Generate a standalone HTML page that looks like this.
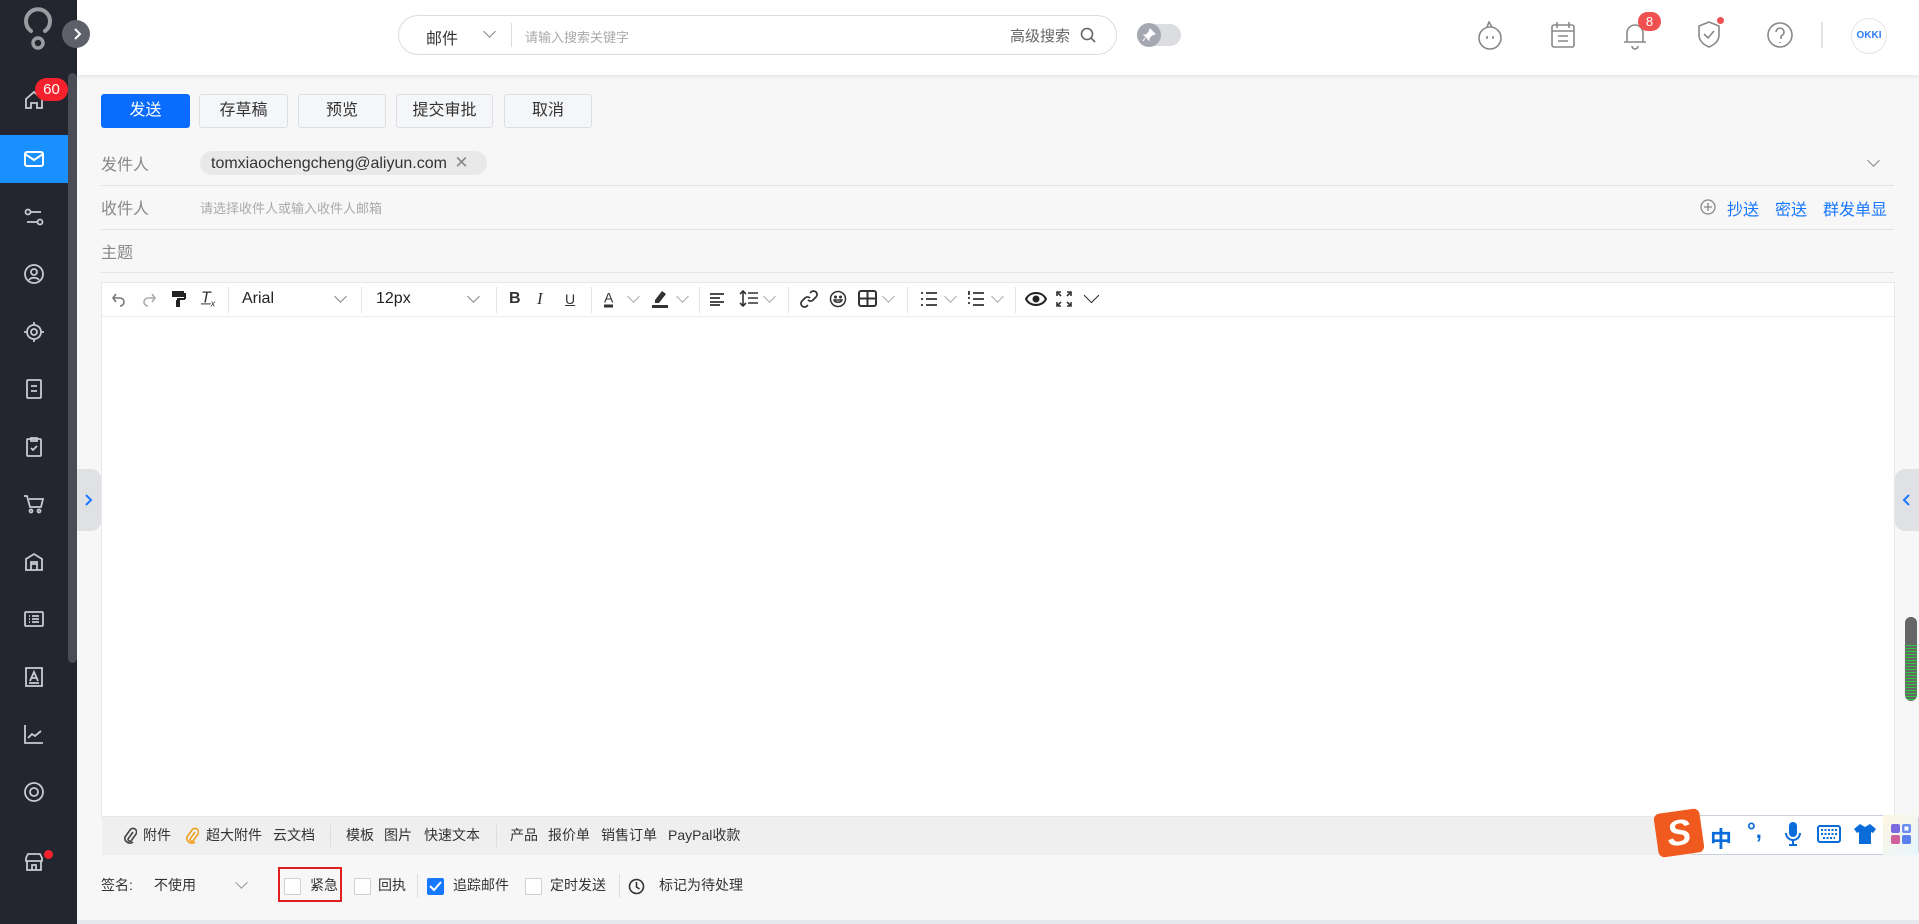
<!DOCTYPE html>
<html><head><meta charset="utf-8"><style>
*{box-sizing:border-box;margin:0;padding:0}
body{width:1919px;height:924px;overflow:hidden;background:#f7f7f8;font-family:"Liberation Sans","Noto Sans CJK SC",sans-serif;color:#333;position:relative}
.abs{position:absolute}
.side{left:0;top:0;width:77px;height:924px;background:#23262e}
.sb{left:68px;top:73px;width:9px;height:590px;background:#4a4d55;border-radius:5px}
.ico{position:absolute;left:22px;width:24px;height:24px}
.hdr{left:77px;top:0;width:1842px;height:75px;background:#fff;box-shadow:0 2px 4px rgba(0,0,0,.08)}
.btn{position:absolute;top:94px;height:34px;border:1px solid #dcdfe6;background:#f5f6f8;border-radius:3px;font-size:16px;line-height:32px;text-align:center;color:#333}
.lbl{position:absolute;left:101px;font-size:16px;color:#888}
.hr{position:absolute;left:101px;width:1793px;height:1px;background:#e3e3e3}
.tb{position:absolute;top:299px;transform:translateY(-50%);font-size:14px;color:#333}
.dv{position:absolute;top:287px;width:1px;height:26px;background:#e5e5e5}
.chev{position:absolute;width:9px;height:9px;border-right:1.5px solid #888;border-bottom:1.5px solid #888;transform:rotate(45deg)}
.ab{position:absolute;top:835px;transform:translateY(-50%);font-size:14px;color:#333}
.sg{position:absolute;top:885px;transform:translateY(-50%);font-size:14px;color:#333}
.cb{position:absolute;top:878px;width:17px;height:17px;border:1px solid #d0d0d0;background:#fff;border-radius:2px}
</style></head><body>
<div class="abs side"></div>
<div class="abs sb"></div>
<svg class="abs" style="left:20px;top:6px" width="36" height="46" viewBox="0 0 36 46"><path d="M11 25 A12 12 0 1 1 25 25" fill="none" stroke="#9a9ca2" stroke-width="4" stroke-linecap="round"/><circle cx="18" cy="37" r="5" fill="none" stroke="#9a9ca2" stroke-width="3.5"/></svg>
<div class="abs hdr"></div>
<div class="abs" style="left:62px;top:20px;width:28px;height:28px;border-radius:50%;background:#5d6068"></div>
<svg class="abs" style="left:70px;top:27px" width="14" height="14"><path d="M5 2l5 5-5 5" fill="none" stroke="#fff" stroke-width="2"/></svg>
<div class="abs" style="left:0;top:135px;width:68px;height:48px;background:#1890ff"></div>
<svg class="ico" style="top:88px" viewBox="0 0 24 24"><path d="M4 11l8-7 8 7v9h-5v-5h-6v5H4z" fill="none" stroke="#c8cad0" stroke-width="1.8"/></svg>
<div class="abs" style="left:35px;top:78px;width:33px;height:23px;border-radius:12px;background:#f5222d;color:#fff;font-size:15px;text-align:center;line-height:23px">60</div>
<svg class="ico" style="top:147px" viewBox="0 0 24 24"><rect x="3" y="5" width="18" height="14" rx="2" fill="none" stroke="#fff" stroke-width="2"/><path d="M3 7l9 6 9-6" fill="none" stroke="#fff" stroke-width="2"/></svg>
<svg class="ico" style="top:205px" viewBox="0 0 24 24" fill="none" stroke="#c8cad0" stroke-width="1.8"><circle cx="6" cy="7" r="2.5"/><circle cx="18" cy="17" r="2.5"/><path d="M9 7h10M5 17h10"/></svg>
<svg class="ico" style="top:262px" viewBox="0 0 24 24" fill="none" stroke="#c8cad0" stroke-width="1.8"><circle cx="12" cy="12" r="9"/><circle cx="12" cy="10" r="3"/><path d="M7 18c2-3 8-3 10 0"/></svg>
<svg class="ico" style="top:320px" viewBox="0 0 24 24" fill="none" stroke="#c8cad0" stroke-width="1.8"><circle cx="12" cy="12" r="7"/><circle cx="12" cy="12" r="3"/><path d="M12 2v3M12 19v3M2 12h3M19 12h3"/></svg>
<svg class="ico" style="top:377px" viewBox="0 0 24 24" fill="none" stroke="#c8cad0" stroke-width="1.8"><rect x="5" y="3" width="14" height="18" rx="1"/><path d="M9 9h6M9 14h6"/></svg>
<svg class="ico" style="top:435px" viewBox="0 0 24 24" fill="none" stroke="#c8cad0" stroke-width="1.8"><rect x="5" y="4" width="14" height="17" rx="1"/><path d="M9 3h6v3H9zM9 13l2 2 4-4"/></svg>
<svg class="ico" style="top:492px" viewBox="0 0 24 24" fill="none" stroke="#c8cad0" stroke-width="1.8"><path d="M2 4h3l3 11h11l2-8H7"/><circle cx="9" cy="19" r="1.5"/><circle cx="17" cy="19" r="1.5"/></svg>
<svg class="ico" style="top:550px" viewBox="0 0 24 24" fill="none" stroke="#c8cad0" stroke-width="1.8"><path d="M4 20V9l8-5 8 5v11zM9 20v-8h6v8M9 14h6"/></svg>
<svg class="ico" style="top:607px" viewBox="0 0 24 24" fill="none" stroke="#c8cad0" stroke-width="1.8"><rect x="3" y="5" width="18" height="14" rx="1"/><path d="M7 9h1M10 9h7M7 12h1M10 12h7M7 15h1M10 15h7"/></svg>
<svg class="ico" style="top:665px" viewBox="0 0 24 24" fill="none" stroke="#c8cad0" stroke-width="1.8"><rect x="4" y="3" width="16" height="18"/><path d="M8 16l4-9 4 9M9.5 13h5M7 18h10"/></svg>
<svg class="ico" style="top:722px" viewBox="0 0 24 24" fill="none" stroke="#c8cad0" stroke-width="1.8"><path d="M3 3v18h18M6 16l4-4 3 2 6-5"/></svg>
<svg class="ico" style="top:780px" viewBox="0 0 24 24" fill="none" stroke="#c8cad0" stroke-width="1.8"><circle cx="12" cy="12" r="9"/><circle cx="12" cy="12" r="4"/></svg>
<svg class="ico" style="top:850px" viewBox="0 0 24 24" fill="none" stroke="#c8cad0" stroke-width="1.8"><path d="M4 8l2-4h12l2 4v3H4zM5 11v9h14v-9M10 20v-5h4v5"/></svg>
<div class="abs" style="left:44px;top:850px;width:9px;height:9px;border-radius:50%;background:#f5222d"></div>
<div class="abs" style="left:398px;top:15px;width:719px;height:40px;border:1px solid #dcdcdc;border-radius:20px;background:#fff"></div>
<div class="abs" style="left:426px;top:25px;font-size:16px;color:#333">邮件</div>
<div class="chev" style="left:485px;top:27px"></div>
<div class="abs" style="left:511px;top:23px;width:1px;height:24px;background:#ddd"></div>
<div class="abs" style="left:525px;top:27px;font-size:13px;color:#aaa">请输入搜索关键字</div>
<div class="abs" style="left:1010px;top:25px;font-size:15px;color:#666">高级搜索</div>
<svg class="abs" style="left:1080px;top:27px" width="16" height="16" fill="none" stroke="#666" stroke-width="1.6"><circle cx="7" cy="7" r="5.5"/><path d="M11 11l4 4"/></svg>
<div class="abs" style="left:1138px;top:24px;width:43px;height:22px;border-radius:11px;background:#dcdde1"></div>
<div class="abs" style="left:1137px;top:23px;width:24px;height:24px;border-radius:50%;background:#a5a8b0"></div>
<svg class="abs" style="left:1142px;top:28px" width="14" height="14"><path d="M8 1l5 5-3 1-3 3 0 2-5-5 2 0 3-3z M3 10l-2 3" fill="#fff" stroke="#fff"/></svg>
<svg class="abs" style="left:1476px;top:21px" width="28" height="30" fill="none" stroke="#888" stroke-width="1.6"><circle cx="14" cy="17" r="11"/><path d="M11 6l2-5 3 5M11 15v3M17 15v3"/></svg>
<svg class="abs" style="left:1550px;top:21px" width="26" height="28" fill="none" stroke="#888" stroke-width="1.6"><rect x="2" y="4" width="22" height="22" rx="2"/><path d="M7 1v6M19 1v6M2 10h22M8 15h10M8 20h10"/></svg>
<svg class="abs" style="left:1622px;top:20px" width="26" height="30" fill="none" stroke="#888" stroke-width="1.6"><path d="M5 22V13a8 8 0 0 1 16 0v9M2 22h22M10 26a3 3 0 0 0 6 0"/></svg>
<div class="abs" style="left:1638px;top:12px;width:23px;height:19px;border-radius:10px;background:#f05050;color:#fff;font-size:13px;text-align:center;line-height:19px">8</div>
<svg class="abs" style="left:1696px;top:20px" width="26" height="30" fill="none" stroke="#888" stroke-width="1.6"><path d="M13 2l10 4v9c0 6-5 10-10 12C8 25 3 21 3 15V6z M8 14l4 4 6-7"/></svg>
<div class="abs" style="left:1717px;top:17px;width:7px;height:7px;border-radius:50%;background:#f05050"></div>
<svg class="abs" style="left:1766px;top:21px" width="28" height="28" fill="none" stroke="#888" stroke-width="1.6"><circle cx="14" cy="14" r="12"/><path d="M10 11a4 4 0 1 1 5 4v3M14 21v1"/></svg>
<div class="abs" style="left:1821px;top:22px;width:2px;height:26px;background:#e2e2e2"></div>
<div class="abs" style="left:1851px;top:18px;width:36px;height:36px;border-radius:50%;border:1px solid #e5e5e5;background:#fff;font-size:10px;font-weight:bold;color:#2d7cf6;text-align:center;line-height:34px">OKKI</div>
<div class="btn" style="left:101px;width:89px;background:#0a6cff;border-color:#0a6cff;color:#fff">发送</div>
<div class="btn" style="left:199px;width:89px">存草稿</div>
<div class="btn" style="left:298px;width:88px">预览</div>
<div class="btn" style="left:396px;width:97px">提交审批</div>
<div class="btn" style="left:504px;width:88px">取消</div>
<div class="lbl" style="top:151px">发件人</div>
<div class="abs" style="left:200px;top:151px;width:287px;height:24px;border-radius:12px;background:#e9e9ea;font-size:16px;line-height:24px;padding-left:11px;color:#333">tomxiaochengcheng@aliyun.com <span style="color:#888;font-size:17px;margin-left:3px">✕</span></div>
<div class="chev" style="left:1869px;top:156px"></div>
<div class="hr" style="top:185px"></div>
<div class="lbl" style="top:195px">收件人</div>
<div class="abs" style="left:200px;top:198px;font-size:13px;color:#aaa">请选择收件人或输入收件人邮箱</div>
<svg class="abs" style="left:1700px;top:199px" width="16" height="16" fill="none" stroke="#888" stroke-width="1.3"><circle cx="8" cy="8" r="7"/><path d="M8 4v8M4 8h8"/></svg>
<div class="abs" style="left:1727px;top:196px;font-size:16px;color:#1677ff">抄送</div>
<div class="abs" style="left:1775px;top:196px;font-size:16px;color:#1677ff">密送</div>
<div class="abs" style="left:1823px;top:196px;font-size:16px;color:#1677ff">群发单显</div>
<div class="hr" style="top:229px"></div>
<div class="lbl" style="top:239px">主题</div>
<div class="hr" style="top:272px"></div>
<div class="abs" style="left:101px;top:282px;width:1794px;height:535px;background:#fff;border:1px solid #e8e8e8"></div>
<div class="abs" style="left:102px;top:316px;width:1792px;height:1px;background:#eee"></div>
<svg class="abs" style="left:111px;top:291px" width="16" height="16" fill="none" stroke="#777" stroke-width="1.6"><path d="M5 3L2 7l3 4M2 7h7a4 4 0 0 1 0 8"/></svg>
<svg class="abs" style="left:141px;top:291px" width="16" height="16" fill="none" stroke="#aaa" stroke-width="1.6"><path d="M11 3l3 4-3 4M14 7H7a4 4 0 0 0 0 8"/></svg>
<svg class="abs" style="left:171px;top:290px" width="16" height="18" fill="#222"><rect x="1" y="1" width="12" height="6"/><rect x="13" y="3" width="2" height="6"/><rect x="6" y="8" width="8" height="2"/><rect x="5" y="10" width="4" height="7"/></svg>
<div class="tb" style="left:201px;font-style:italic;font-size:16px;text-decoration:underline">T<sub style="font-size:9px">x</sub></div>
<div class="dv" style="left:228px"></div>
<div class="tb" style="left:242px;font-size:16px;color:#222">Arial</div>
<div class="chev" style="left:336px;top:292px"></div>
<div class="dv" style="left:361px"></div>
<div class="tb" style="left:376px;font-size:16px;color:#222">12px</div>
<div class="chev" style="left:469px;top:292px"></div>
<div class="dv" style="left:496px"></div>
<div class="tb" style="left:509px;font-weight:bold;font-size:16px">B</div>
<div class="tb" style="left:537px;font-style:italic;font-family:'Liberation Serif',serif;font-size:17px">I</div>
<div class="tb" style="left:565px;text-decoration:underline;font-size:14px">U</div>
<div class="dv" style="left:591px"></div>
<div class="tb" style="left:604px;font-size:14px;border-bottom:3px solid #333;line-height:14px">A</div>
<div class="chev" style="left:629px;top:292px;border-color:#aaa"></div>
<svg class="abs" style="left:651px;top:289px" width="18" height="20" fill="#333"><path d="M4 11l7-9 4 3-7 9H4z"/><rect x="1" y="16" width="16" height="3"/></svg>
<div class="chev" style="left:678px;top:292px;border-color:#aaa"></div>
<div class="dv" style="left:699px"></div>
<svg class="abs" style="left:709px;top:292px" width="16" height="14" stroke="#333" stroke-width="1.8"><path d="M1 2h14M1 6h10M1 10h14M1 13h10"/></svg>
<svg class="abs" style="left:739px;top:290px" width="20" height="17" fill="none" stroke="#333" stroke-width="1.6"><path d="M4 1v15M1 4l3-3 3 3M1 13l3 3 3-3M9 3h10M9 8h10M9 13h10"/></svg>
<div class="chev" style="left:765px;top:292px;border-color:#aaa"></div>
<div class="dv" style="left:788px"></div>
<svg class="abs" style="left:800px;top:290px" width="18" height="18" fill="none" stroke="#333" stroke-width="1.7"><path d="M8 10a3.5 3.5 0 0 0 5 0l3-3a3.5 3.5 0 0 0-5-5l-1 1M10 8a3.5 3.5 0 0 0-5 0l-3 3a3.5 3.5 0 0 0 5 5l1-1"/></svg>
<svg class="abs" style="left:829px;top:290px" width="18" height="18" fill="none" stroke="#333" stroke-width="1.5"><circle cx="9" cy="9" r="7.5"/><path d="M5 10c1 3 7 3 8 0z"/><circle cx="6.5" cy="7" r=".8" fill="#333"/><circle cx="11.5" cy="7" r=".8" fill="#333"/></svg>
<svg class="abs" style="left:858px;top:290px" width="19" height="17"><rect x="1" y="1" width="17" height="15" rx="2" fill="none" stroke="#333" stroke-width="2"/><path d="M1 8.5h17M9.5 1v15" stroke="#333" stroke-width="2"/></svg>
<div class="chev" style="left:884px;top:292px;border-color:#aaa"></div>
<div class="dv" style="left:907px"></div>
<svg class="abs" style="left:920px;top:291px" width="18" height="16" stroke="#333" stroke-width="1.8"><path d="M1 2h2M1 8h2M1 14h2M6 2h11M6 8h11M6 14h11"/></svg>
<div class="chev" style="left:946px;top:292px;border-color:#aaa"></div>
<svg class="abs" style="left:967px;top:291px" width="18" height="16" stroke="#333" stroke-width="1.8"><path d="M2 0v4M1 7h2M1 12h2M6 2h11M6 8h11M6 14h11"/></svg>
<div class="chev" style="left:993px;top:292px;border-color:#aaa"></div>
<div class="dv" style="left:1015px"></div>
<svg class="abs" style="left:1025px;top:290px" width="22" height="18"><path d="M1 9c4-8 16-8 20 0-4 8-16 8-20 0z" fill="none" stroke="#222" stroke-width="2"/><circle cx="11" cy="9" r="3.5" fill="#222"/></svg>
<svg class="abs" style="left:1056px;top:291px" width="16" height="16" stroke="#333" stroke-width="1.6" fill="none"><path d="M1 5V1h4M1 1l4 4M11 1h4v4M15 1l-4 4M1 11v4h4M1 15l4-4M15 11v4h-4M15 15l-4-4"/></svg>
<div class="chev" style="left:1086px;top:290px;border-color:#222;width:11px;height:11px"></div>
<div class="abs" style="left:102px;top:817px;width:1792px;height:38px;background:#efefef"></div>
<svg class="abs" style="left:123px;top:827px" width="14" height="18" fill="none" stroke="#444" stroke-width="1.6"><path d="M10 5l-5 7a2 2 0 0 0 3 2l5-7a3.5 3.5 0 0 0-6-4l-5 7a5 5 0 0 0 8 5"/></svg>
<div class="ab" style="left:143px">附件</div>
<svg class="abs" style="left:185px;top:827px" width="14" height="18" fill="none" stroke="#f0a020" stroke-width="1.6"><path d="M10 5l-5 7a2 2 0 0 0 3 2l5-7a3.5 3.5 0 0 0-6-4l-5 7a5 5 0 0 0 8 5"/></svg>
<div class="ab" style="left:206px">超大附件</div>
<div class="ab" style="left:273px">云文档</div>
<div class="abs" style="left:330px;top:825px;width:1px;height:22px;background:#ddd"></div>
<div class="ab" style="left:346px">模板</div>
<div class="ab" style="left:384px">图片</div>
<div class="ab" style="left:424px">快速文本</div>
<div class="abs" style="left:496px;top:825px;width:1px;height:22px;background:#ddd"></div>
<div class="ab" style="left:510px">产品</div>
<div class="ab" style="left:548px">报价单</div>
<div class="ab" style="left:601px">销售订单</div>
<div class="ab" style="left:668px">PayPal收款</div>
<div class="sg" style="left:101px">签名:</div>
<div class="sg" style="left:154px">不使用</div>
<div class="chev" style="left:237px;top:878px;border-color:#999"></div>
<div class="abs" style="left:278px;top:867px;width:64px;height:35px;border:2px solid #e02020"></div>
<div class="cb" style="left:284px"></div>
<div class="sg" style="left:310px">紧急</div>
<div class="cb" style="left:354px"></div>
<div class="sg" style="left:378px">回执</div>
<div class="abs" style="left:417px;top:874px;width:1px;height:24px;background:#ddd"></div>
<div class="cb" style="left:427px;background:#1677ff;border-color:#1677ff"></div>
<svg class="abs" style="left:429px;top:881px" width="13" height="11" fill="none" stroke="#fff" stroke-width="2"><path d="M1 5l4 4 7-8"/></svg>
<div class="sg" style="left:453px">追踪邮件</div>
<div class="cb" style="left:525px"></div>
<div class="sg" style="left:550px">定时发送</div>
<div class="abs" style="left:619px;top:874px;width:1px;height:24px;background:#ddd"></div>
<svg class="abs" style="left:628px;top:878px" width="17" height="17" fill="none" stroke="#333" stroke-width="1.6"><circle cx="8.5" cy="8.5" r="7"/><path d="M8.5 4v5l3 2"/></svg>
<div class="sg" style="left:659px">标记为待处理</div>
<div class="abs" style="left:0;top:920px;width:1919px;height:4px;background:#e6e8ee"></div>
<div class="abs" style="left:0;top:920px;width:77px;height:4px;background:#23262e"></div>
<div class="abs" style="left:77px;top:469px;width:24px;height:62px;background:#e0e1e5;border-radius:0 10px 10px 0"></div>
<svg class="abs" style="left:84px;top:494px" width="10" height="12" fill="none" stroke="#1677ff" stroke-width="2"><path d="M2 1l5 5-5 5"/></svg>
<div class="abs" style="left:1895px;top:469px;width:24px;height:62px;background:#e0e1e5;border-radius:10px 0 0 10px"></div>
<svg class="abs" style="left:1902px;top:494px" width="10" height="12" fill="none" stroke="#1677ff" stroke-width="2"><path d="M7 1L2 6l5 5"/></svg>
<div class="abs" style="left:1905px;top:617px;width:12px;height:84px;border-radius:6px;background:#666;background-image:repeating-linear-gradient(#666 0 2px,#2ecc40 2px 3px);background-size:100% 3px;background-position:0 26px"></div>
<div class="abs" style="left:1905px;top:617px;width:12px;height:26px;border-radius:6px 6px 0 0;background:#666"></div>
<div class="abs" style="left:1690px;top:815px;width:229px;height:40px;background:#fff;border:1px solid #c8d0dc;border-radius:4px"></div>
<div class="abs" style="left:1656px;top:811px;width:46px;height:44px;background:#f05a1e;border-radius:6px;transform:rotate(-8deg);color:#fff;font-weight:bold;font-size:36px;text-align:center;line-height:44px;font-style:italic">S</div>
<div class="abs" style="left:1710px;top:822px;font-size:22px;font-weight:bold;color:#0a6cd8">中</div>
<div class="abs" style="left:1747px;top:818px;font-size:22px;font-weight:bold;color:#0a6cd8">°,</div>
<svg class="abs" style="left:1784px;top:822px" width="18" height="26" fill="#0a6cd8"><rect x="5" y="0" width="8" height="15" rx="4"/><path d="M2 11a7 7 0 0 0 14 0" fill="none" stroke="#0a6cd8" stroke-width="2"/><rect x="8" y="18" width="2" height="4"/><rect x="5" y="22" width="8" height="2"/></svg>
<svg class="abs" style="left:1817px;top:825px" width="24" height="18"><rect x="1" y="1" width="22" height="16" rx="2" fill="none" stroke="#0a6cd8" stroke-width="2"/><path d="M4 5h16M4 9h16M6 13h12" stroke="#0a6cd8" stroke-width="2" stroke-dasharray="2 1.5"/></svg>
<svg class="abs" style="left:1853px;top:823px" width="24" height="22" fill="#0a6cd8"><path d="M7 1l5 3 5-3 6 5-3 4-2-1v12H6V9l-2 1-3-4z"/></svg>
<div class="abs" style="left:1883px;top:815px;width:35px;height:40px;background:linear-gradient(135deg,#fff6e0,#e6f6ff)"></div>
<svg class="abs" style="left:1890px;top:823px" width="22" height="22"><rect x="1" y="1" width="9" height="9" rx="2" fill="#7b6be0"/><rect x="12" y="1" width="9" height="9" rx="2" fill="#6b8ef0"/><rect x="1" y="12" width="9" height="9" rx="2" fill="#d0609a"/><rect x="12" y="12" width="9" height="9" rx="2" fill="#5a80f0"/><rect x="14.5" y="3.5" width="4" height="4" fill="#fff"/></svg>
</body></html>
